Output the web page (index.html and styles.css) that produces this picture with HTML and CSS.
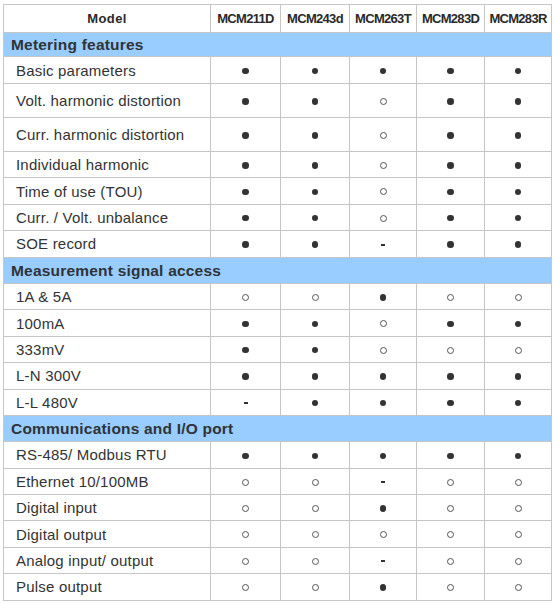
FILE: index.html
```html
<!DOCTYPE html>
<html>
<head>
<meta charset="utf-8">
<link rel="stylesheet" href="styles.css">
</head>
<body>
<table class="spec">
  <colgroup>
    <col class="c-name"><col class="c1"><col class="c2"><col class="c3"><col class="c4"><col class="c5">
  </colgroup>
  <thead>
    <tr class="head">
      <th class="model">Model</th><th>MCM211D</th><th>MCM243d</th><th>MCM263T</th><th>MCM283D</th><th>MCM283R</th>
    </tr>
  </thead>
  <tbody>
    <tr class="section s1"><td colspan="6">Metering features</td></tr>
    <tr class="r-first"><td class="name">Basic parameters</td><td><i class="f"></i></td><td><i class="f"></i></td><td><i class="f"></i></td><td><i class="f"></i></td><td><i class="f"></i></td></tr>
    <tr class="r-tall"><td class="name">Volt. harmonic distortion</td><td><i class="f"></i></td><td><i class="f"></i></td><td><i class="o"></i></td><td><i class="f"></i></td><td><i class="f"></i></td></tr>
    <tr class="r-tall"><td class="name">Curr. harmonic distortion</td><td><i class="f"></i></td><td><i class="f"></i></td><td><i class="o"></i></td><td><i class="f"></i></td><td><i class="f"></i></td></tr>
    <tr><td class="name">Individual harmonic</td><td><i class="f"></i></td><td><i class="f"></i></td><td><i class="o"></i></td><td><i class="f"></i></td><td><i class="f"></i></td></tr>
    <tr><td class="name">Time of use (TOU)</td><td><i class="f"></i></td><td><i class="f"></i></td><td><i class="o"></i></td><td><i class="f"></i></td><td><i class="f"></i></td></tr>
    <tr><td class="name">Curr. / Volt. unbalance</td><td><i class="f"></i></td><td><i class="f"></i></td><td><i class="o"></i></td><td><i class="f"></i></td><td><i class="f"></i></td></tr>
    <tr><td class="name">SOE record</td><td><i class="f"></i></td><td><i class="f"></i></td><td><i class="d"></i></td><td><i class="f"></i></td><td><i class="f"></i></td></tr>
    <tr class="section"><td colspan="6">Measurement signal access</td></tr>
    <tr><td class="name">1A &amp; 5A</td><td><i class="o"></i></td><td><i class="o"></i></td><td><i class="f"></i></td><td><i class="o"></i></td><td><i class="o"></i></td></tr>
    <tr><td class="name">100mA</td><td><i class="f"></i></td><td><i class="f"></i></td><td><i class="o"></i></td><td><i class="f"></i></td><td><i class="f"></i></td></tr>
    <tr><td class="name">333mV</td><td><i class="f"></i></td><td><i class="f"></i></td><td><i class="o"></i></td><td><i class="o"></i></td><td><i class="o"></i></td></tr>
    <tr><td class="name">L-N 300V</td><td><i class="f"></i></td><td><i class="f"></i></td><td><i class="f"></i></td><td><i class="f"></i></td><td><i class="f"></i></td></tr>
    <tr><td class="name">L-L 480V</td><td><i class="d"></i></td><td><i class="f"></i></td><td><i class="f"></i></td><td><i class="f"></i></td><td><i class="f"></i></td></tr>
    <tr class="section"><td colspan="6">Communications and I/O port</td></tr>
    <tr><td class="name">RS-485/ Modbus RTU</td><td><i class="f"></i></td><td><i class="f"></i></td><td><i class="f"></i></td><td><i class="f"></i></td><td><i class="f"></i></td></tr>
    <tr><td class="name">Ethernet 10/100MB</td><td><i class="o"></i></td><td><i class="o"></i></td><td><i class="d"></i></td><td><i class="o"></i></td><td><i class="o"></i></td></tr>
    <tr><td class="name">Digital input</td><td><i class="o"></i></td><td><i class="o"></i></td><td><i class="f"></i></td><td><i class="o"></i></td><td><i class="o"></i></td></tr>
    <tr><td class="name">Digital output</td><td><i class="o"></i></td><td><i class="o"></i></td><td><i class="o"></i></td><td><i class="o"></i></td><td><i class="o"></i></td></tr>
    <tr><td class="name">Analog input/ output</td><td><i class="o"></i></td><td><i class="o"></i></td><td><i class="d"></i></td><td><i class="o"></i></td><td><i class="o"></i></td></tr>
    <tr><td class="name">Pulse output</td><td><i class="o"></i></td><td><i class="o"></i></td><td><i class="f"></i></td><td><i class="o"></i></td><td><i class="o"></i></td></tr>
  </tbody>
</table>
</body>
</html>
```
FILE: styles.css
```css
html, body {
  margin: 0;
  padding: 0;
  background: #ffffff;
}
body {
  padding: 4px 0 0 3px;
  font-family: "Liberation Sans", Arial, sans-serif;
  color: #333333;
}
.spec {
  border-collapse: collapse;
  table-layout: fixed;
  width: 548px;
  border: 1px solid #b4b4b4;
}
.c-name { width: 207px; }
.c1 { width: 70px; }
.c2 { width: 69px; }
.c3 { width: 67px; }
.c4 { width: 68px; }
.c5 { width: 67px; }

.spec th,
.spec td {
  border: 1px solid #c6c6c6;
  padding: 0;
  text-align: center;
  vertical-align: middle;
  line-height: 1;
}
.spec tr { height: 26.4px; }
.spec tr.head { height: 28px; }
.spec tr.r-first { height: 27px; }
.spec tr.r-tall { height: 34px; }

.head th {
  font-size: 13px;
  font-weight: bold;
  letter-spacing: -0.7px;
  color: #2a2a2a;
}
.head th.model {
  font-size: 13px;
  letter-spacing: 0.4px;
}
.section td {
  background: #99ccff;
  text-align: left;
  padding-left: 7px;
  font-size: 15.5px;
  font-weight: bold;
  letter-spacing: 0.2px;
  color: #2e3338;
}
.spec tr.section { height: 26.4px; }
.spec tr.section.s1 { height: 24px; }

.spec td.name {
  text-align: left;
  padding-left: 12px;
  font-size: 15px;
  letter-spacing: 0.2px;
  color: #333333;
}

.f, .o, .d {
  display: inline-block;
  vertical-align: middle;
}
.f {
  width: 6.5px;
  height: 6.5px;
  border-radius: 50%;
  background: #333333;
}
.o {
  width: 7px;
  height: 7px;
  box-sizing: border-box;
  border-radius: 50%;
  border: 1.2px solid #555555;
}
.d {
  width: 4px;
  height: 2px;
  background: #333333;
}
```
